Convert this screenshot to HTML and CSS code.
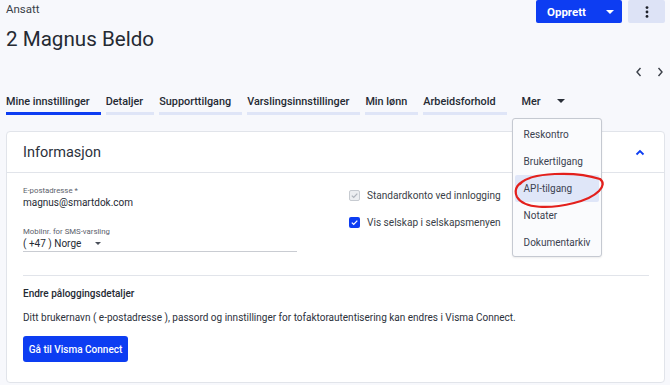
FILE: index.html
```html
<!DOCTYPE html>
<html lang="no">

<head>
    <meta charset="UTF-8">
    <title>Ansatt - Magnus Beldo</title>
    <link rel="stylesheet" href="styles.css">
</head>

<body>
    <header class="page-header">
        <div class="title-block">
            <div class="kicker">Ansatt</div>
            <h1>2 Magnus Beldo</h1>
        </div>
        <div class="actions">
            <button class="btn-primary btn-split">Opprett <span class="caret caret-white"></span></button>
            <button class="btn-more" aria-label="Flere valg">
                <svg width="4" height="12" viewBox="0 0 4 12"><circle cx="2" cy="1.6" r="1.4" /><circle cx="2" cy="6" r="1.4" /><circle cx="2" cy="10.4" r="1.4" /></svg>
            </button>
        </div>
    </header>

    <div class="pager">
        <svg width="8" height="10" viewBox="0 0 8 10"><path d="M5.5 1 L2 5 L5.5 9" /></svg>
        <svg width="8" height="10" viewBox="0 0 8 10"><path d="M2.5 1 L6 5 L2.5 9" /></svg>
    </div>

    <nav class="tabs">
        <a class="tab active">Mine innstillinger</a>
        <a class="tab">Detaljer</a>
        <a class="tab">Supporttilgang</a>
        <a class="tab">Varslingsinnstillinger</a>
        <a class="tab">Min lønn</a>
        <a class="tab">Arbeidsforhold</a>
        <div class="tab-more">
            Mer <span class="caret"></span>
            <ul class="dropdown">
                <li>Reskontro</li>
                <li>Brukertilgang</li>
                <li class="hover">API-tilgang</li>
                <li>Notater</li>
                <li>Dokumentarkiv</li>
            </ul>
            <!-- red hand drawn marking -->
            <svg class="scribble" width="100" height="100" viewBox="0 0 100 100">
                <path d="M8 66 C 18 54, 64 53, 88 61 C 96 67, 86 79, 62 85 C 38 91, 12 91, 5 79 C 1 71, 6 64, 18 60" />
            </svg>
        </div>
    </nav>

    <section class="card">
        <div class="card-header">
            <h2>Informasjon</h2>
            <svg width="10" height="7" viewBox="0 0 10 7"><path d="M1.5 5.5 L5 2 L8.5 5.5" /></svg>
        </div>
        <div class="card-body">
            <div class="fields">
                <div class="col-left">
                    <label class="field-label">E-postadresse *</label>
                    <div class="field-value">magnus@smartdok.com</div>
                    <label class="field-label second">Mobilnr. for SMS-varsling</label>
                    <div class="select">( +47 ) Norge <span class="caret caret-small"></span></div>
                </div>
                <div class="col-right">
                    <div class="check disabled"><span class="box">
                            <svg width="9" height="9" viewBox="0 0 9 9"><path d="M1.8 4.6 L3.7 6.4 L7.3 2.6" /></svg></span>Standardkonto ved innlogging</div>
                    <div class="check checked"><span class="box">
                            <svg width="9" height="9" viewBox="0 0 9 9"><path d="M1.8 4.6 L3.7 6.4 L7.3 2.6" /></svg></span>Vis selskap i selskapsmenyen</div>
                </div>
            </div>
            <hr>
            <h3>Endre påloggingsdetaljer</h3>
            <p>Ditt brukernavn ( e-postadresse ), passord og innstillinger for tofaktorautentisering kan endres i Visma Connect.</p>
            <button class="btn-primary btn-connect">Gå til Visma Connect</button>
        </div>
    </section>
</body>

</html>
```

FILE: styles.css
```css
body {
    margin: 0;
    padding: 0 5px 0 6px;
    background: #f7f8fc;
    font-family: Roboto, "Noto Sans", sans-serif;
    color: #252a33;
}

.page-header {
    display: flex;
    justify-content: space-between;
}

.kicker {
    font-size: 11.5px;
    line-height: 18px;
    color: #3a3f48;
}

h1 {
    margin: 7px 0 0;
    font-size: 20.6px;
    line-height: 28px;
    font-weight: 400;
    color: #252a33;
}

.actions {
    display: flex;
    gap: 6px;
}

button {
    font-family: inherit;
    border: none;
    cursor: pointer;
}

.btn-primary {
    background: #0d3df2;
    color: #fff;
    font-weight: 500;
    border-radius: 2px;
}

.btn-split {
    width: 86px;
    height: 23px;
    font-size: 11.5px;
    font-weight: 700;
    display: flex;
    align-items: center;
    padding: 0 0 0 11px;
    gap: 20px;
}

.btn-more {
    width: 37px;
    height: 23px;
    background: #dde3f6;
    border-radius: 2px;
    display: flex;
    align-items: center;
    justify-content: center;
}

.btn-more svg {
    fill: #1c2029;
}

.caret {
    display: inline-block;
    width: 0;
    height: 0;
    border-left: 4px solid transparent;
    border-right: 4px solid transparent;
    border-top: 4px solid #2a2f38;
}

.caret-white {
    border-top-color: #fff;
}

.caret-small {
    border-left-width: 3.5px;
    border-right-width: 3.5px;
    border-top: 3.5px solid #4a505a;
    margin-left: 11px;
    vertical-align: 2px;
}

.pager {
    display: flex;
    justify-content: flex-end;
    gap: 13px;
    margin-top: 12px;
    height: 14px;
    align-items: center;
    padding-right: 1px;
}

.pager svg path {
    fill: none;
    stroke: #3a3f48;
    stroke-width: 1.4;
}

.tabs {
    display: flex;
    gap: 5px;
    margin-top: 15px;
    height: 21px;
}

.tab {
    font-size: 10.85px;
    font-weight: 500;
    line-height: 16px;
    padding: 0 11px 2px 0;
    border-bottom: 3px solid #dfe5f7;
    color: #252a33;
}

.tab.active {
    border-bottom-color: #0d3df2;
}

.tab-more {
    position: relative;
    margin-left: 10px;
    font-size: 10.85px;
    font-weight: 500;
    line-height: 16px;
    color: #252a33;
}

.tab-more .caret {
    margin-left: 14px;
    vertical-align: 2px;
}

.dropdown {
    position: absolute;
    top: 24px;
    left: -10px;
    width: 88px;
    margin: 0;
    padding: 2px 0 0;
    list-style: none;
    background: #fafbfd;
    border: 1px solid #c5c9d1;
    border-radius: 3px;
    box-shadow: 0 1px 2px rgba(0, 0, 0, 0.08);
    z-index: 10;
}

.dropdown li {
    height: 27px;
    line-height: 27px;
    margin: 0 2px;
    padding-left: 9px;
    font-size: 10px;
    font-weight: 400;
    color: #3b4250;
    border-radius: 2px;
}

.dropdown li.hover {
    background: #dfe6f8;
}

.scribble {
    position: absolute;
    top: 24px;
    left: -10px;
    overflow: visible;
    z-index: 11;
}

.scribble path {
    fill: none;
    stroke: #e3201c;
    stroke-width: 2.2;
    stroke-linecap: round;
}

.card {
    margin-top: 16px;
    background: #fff;
    border: 1px solid #e1e4ea;
    border-radius: 4px;
}

.card-header {
    height: 40px;
    display: flex;
    align-items: center;
    justify-content: space-between;
    padding: 0 19px 0 16px;
    border-bottom: 1px solid #e1e4ea;
}

h2 {
    margin: 0;
    font-size: 14.5px;
    font-weight: 400;
    color: #2c313b;
}

.card-header svg path {
    fill: none;
    stroke: #0d3df2;
    stroke-width: 1.8;
}

.card-body {
    padding: 13px 15px 20px 16px;
}

.fields {
    display: grid;
    grid-template-columns: 274px 1fr;
    column-gap: 52px;
}

.field-label {
    display: block;
    font-size: 7.8px;
    line-height: 10px;
    color: #5b616b;
}

.field-label.second {
    margin-top: 17px;
}

.field-value {
    font-size: 10px;
    line-height: 14px;
    color: #252a33;
}

.select {
    font-size: 10px;
    line-height: 14px;
    color: #252a33;
    border-bottom: 1px solid #c9ccd2;
}

.col-right {
    padding-top: 3px;
}

.check {
    display: flex;
    align-items: center;
    font-size: 10.1px;
    line-height: 13px;
    color: #3a3f48;
    margin-bottom: 14px;
}

.box {
    width: 11px;
    height: 11px;
    border-radius: 2px;
    margin-right: 7px;
    display: flex;
    align-items: center;
    justify-content: center;
    box-sizing: border-box;
}

.box path {
    fill: none;
    stroke-width: 1.3;
}

.check.disabled .box {
    background: #eceef1;
    border: 1px solid #c7cbd1;
}

.check.disabled .box path {
    stroke: #b0b5bd;
}

.check.checked .box {
    background: #0d3df2;
}

.check.checked .box path {
    stroke: #fff;
}

hr {
    margin: 23px 0 0;
    border: none;
    border-top: 1px solid #e1e4ea;
}

h3 {
    margin: 11px 0 0;
    font-size: 10px;
    line-height: 14px;
    font-weight: 500;
    color: #252a33;
}

p {
    margin: 10px 0 0;
    font-size: 10px;
    line-height: 14px;
    color: #2c313b;
}

.btn-connect {
    margin-top: 11px;
    height: 26px;
    width: 105px;
    font-size: 10px;
    padding: 0;
    border-radius: 3px;
}
```
